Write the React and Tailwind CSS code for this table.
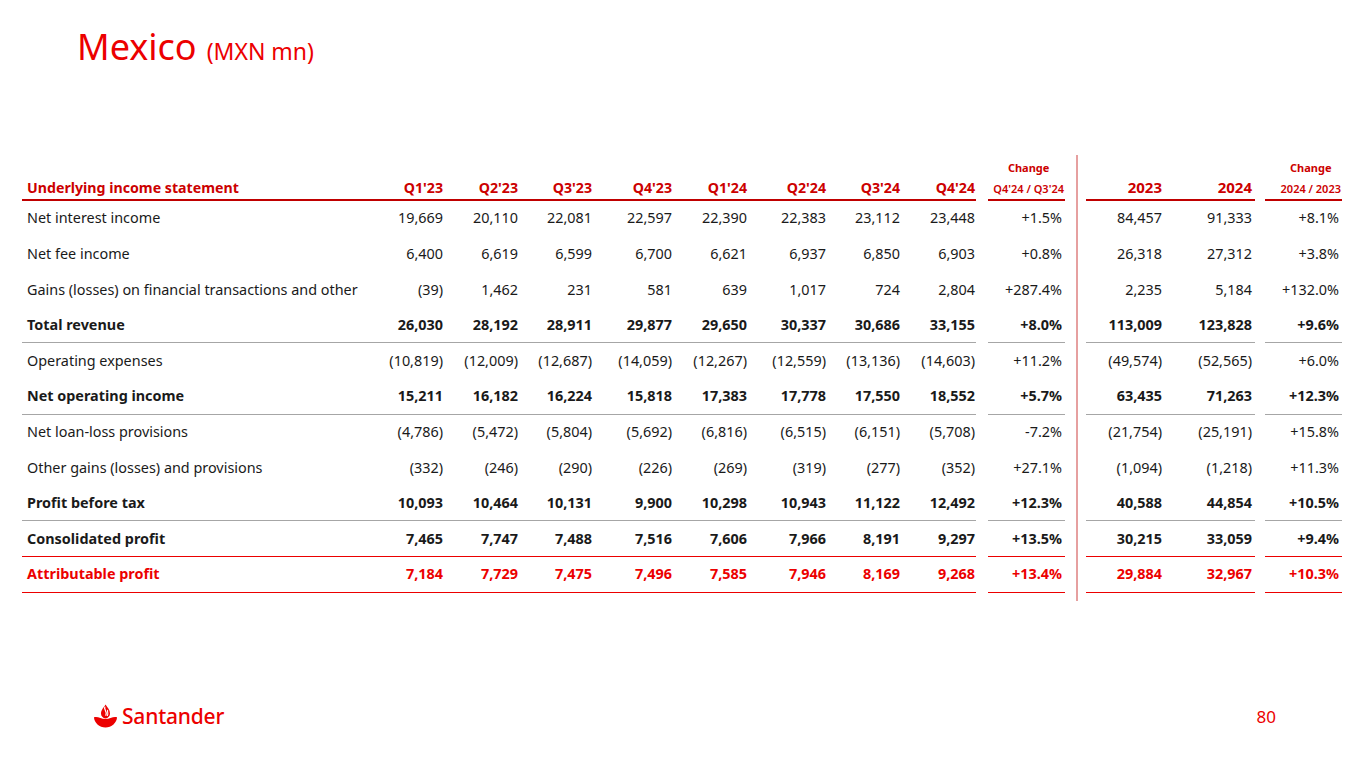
import React from "react";

const QW = ["w-[76px]", "w-[75px]", "w-[74px]", "w-[80px]", "w-[75px]", "w-[79px]", "w-[74px]", "w-[75px]"];
const QH = ["Q1'23", "Q2'23", "Q3'23", "Q4'23", "Q1'24", "Q2'24", "Q3'24", "Q4'24"];

const rows = [
  { label: "Net interest income", q: ["19,669", "20,110", "22,081", "22,597", "22,390", "22,383", "23,112", "23,448"], c: "+1.5%", y: ["84,457", "91,333"], c2: "+8.1%" },
  { label: "Net fee income", q: ["6,400", "6,619", "6,599", "6,700", "6,621", "6,937", "6,850", "6,903"], c: "+0.8%", y: ["26,318", "27,312"], c2: "+3.8%" },
  { label: "Gains (losses) on financial transactions and other", q: ["(39)", "1,462", "231", "581", "639", "1,017", "724", "2,804"], c: "+287.4%", y: ["2,235", "5,184"], c2: "+132.0%" },
  { label: "Total revenue", bold: true, line: "gray", q: ["26,030", "28,192", "28,911", "29,877", "29,650", "30,337", "30,686", "33,155"], c: "+8.0%", y: ["113,009", "123,828"], c2: "+9.6%" },
  { label: "Operating expenses", q: ["(10,819)", "(12,009)", "(12,687)", "(14,059)", "(12,267)", "(12,559)", "(13,136)", "(14,603)"], c: "+11.2%", y: ["(49,574)", "(52,565)"], c2: "+6.0%" },
  { label: "Net operating income", bold: true, line: "gray", q: ["15,211", "16,182", "16,224", "15,818", "17,383", "17,778", "17,550", "18,552"], c: "+5.7%", y: ["63,435", "71,263"], c2: "+12.3%" },
  { label: "Net loan-loss provisions", q: ["(4,786)", "(5,472)", "(5,804)", "(5,692)", "(6,816)", "(6,515)", "(6,151)", "(5,708)"], c: "-7.2%", y: ["(21,754)", "(25,191)"], c2: "+15.8%" },
  { label: "Other gains (losses) and provisions", q: ["(332)", "(246)", "(290)", "(226)", "(269)", "(319)", "(277)", "(352)"], c: "+27.1%", y: ["(1,094)", "(1,218)"], c2: "+11.3%" },
  { label: "Profit before tax", bold: true, line: "gray", q: ["10,093", "10,464", "10,131", "9,900", "10,298", "10,943", "11,122", "12,492"], c: "+12.3%", y: ["40,588", "44,854"], c2: "+10.5%" },
  { label: "Consolidated profit", bold: true, line: "red", q: ["7,465", "7,747", "7,488", "7,516", "7,606", "7,966", "8,191", "9,297"], c: "+13.5%", y: ["30,215", "33,059"], c2: "+9.4%" },
  { label: "Attributable profit", bold: true, red: true, line: "red", q: ["7,184", "7,729", "7,475", "7,496", "7,585", "7,946", "8,169", "9,268"], c: "+13.4%", y: ["29,884", "32,967"], c2: "+10.3%" },
];

function lineCls(line) {
  if (line === "gray") return "border-b border-[#a6a6a6]";
  if (line === "red") return "border-b border-[#ec0000]";
  return "border-b border-transparent";
}

function textCls(r) {
  if (r.red) return "font-bold text-[#ec0000]";
  if (r.bold) return "font-bold text-[#1a1a1a]";
  return "font-normal text-[#1a1a1a]";
}

function Flame() {
  return (
    <svg width="25" height="24" viewBox="0 0 25 24">
      <path d="M12.5 0.5 C14.5 3.5 17 5.8 17 9.5 C17 12.3 15 14 12.5 14.6 C10 14 8 12.3 8 9.5 C8 6 10.8 3.6 12.5 0.5Z" fill="#ec0000" />
      <path d="M11.8 3.2 C10.6 5.6 14.6 7.4 12.9 11.2" stroke="#fff" strokeWidth="1.3" fill="none" strokeLinecap="round" />
      <path d="M14.6 6.4 C14.2 8.2 15.6 9.2 14.4 11.6" stroke="#fff" strokeWidth="1.1" fill="none" strokeLinecap="round" />
      <path d="M1 13.2 C4.5 12 8 14.6 12.5 15.1 C17 14.6 20.5 12 24 13.2 C24 18.5 18.5 23.5 12.5 23.5 C6.5 23.5 1 18.5 1 13.2Z" fill="#ec0000" />
    </svg>
  );
}

function ChangeHead({ sub }) {
  return (
    <div className="flex flex-col items-center leading-none text-[#cc0000] font-bold">
      <span className="text-[11px] mb-[10px]">Change</span>
      <span className="text-[11px] font-semibold">{sub}</span>
    </div>
  );
}

export default function App() {
  return (
    <div className="w-[1365px] h-[768px] bg-white flex flex-col font-['Noto_Sans',sans-serif] overflow-hidden">
      <div className="pt-[29px] pl-[77px] h-[64px] flex items-baseline text-[#ec0000] leading-none">
        <span className="text-[36px]">Mexico</span>
        <span className="text-[23px] ml-[10px]">(MXN mn)</span>
      </div>

      <div className="mt-[91px] pl-[22px] flex text-[14.4px]">
        {/* Left block */}
        <div className="flex flex-col pb-[8px]">
          <div className="flex h-[46px]">
            <div className="w-[954px] flex items-end pb-[1px] border-b-2 border-[#c00000] text-[#cc0000] font-bold text-[14.2px]">
              <div className="w-[346px] pl-[5px]">Underlying income statement</div>
              {QH.map((h, i) => (
                <div key={h} className={QW[i] + " text-right pr-[1px]"}>{h}</div>
              ))}
            </div>
            <div className="ml-[12px] w-[77px] flex items-end justify-end pb-[5px] pr-[1px] border-b-2 border-[#c00000]">
              <ChangeHead sub="Q4'24 / Q3'24" />
            </div>
          </div>
          {rows.map((r) => (
            <div key={r.label} className={"flex h-[35.6px] " + textCls(r)}>
              <div className={"w-[954px] flex items-center " + lineCls(r.line)}>
                <div className="w-[346px] pl-[5px] whitespace-nowrap">{r.label}</div>
                {r.q.map((v, i) => (
                  <div key={i} className={QW[i] + " text-right pr-[1px]"}>{v}</div>
                ))}
              </div>
              <div className={"ml-[12px] w-[77px] flex items-center justify-end pr-[3px] " + lineCls(r.line)}>{r.c}</div>
            </div>
          ))}
        </div>

        {/* Divider */}
        <div className="ml-[11px] w-[2px] bg-[#e6a0a0] mr-[8px]" />

        {/* Right block */}
        <div className="flex flex-col pb-[8px]">
          <div className="flex h-[46px]">
            <div className="w-[169px] flex items-end pb-[1px] border-b-2 border-[#c00000] text-[#cc0000] font-bold text-[15px]">
              <div className="w-[79px] text-right pr-[3px]">2023</div>
              <div className="w-[90px] text-right pr-[3px]">2024</div>
            </div>
            <div className="ml-[10px] w-[77px] flex items-end justify-end pb-[5px] pr-[1px] border-b-2 border-[#c00000]">
              <ChangeHead sub="2024 / 2023" />
            </div>
          </div>
          {rows.map((r) => (
            <div key={r.label} className={"flex h-[35.6px] " + textCls(r)}>
              <div className={"w-[169px] flex items-center " + lineCls(r.line)}>
                <div className="w-[79px] text-right pr-[3px]">{r.y[0]}</div>
                <div className="w-[90px] text-right pr-[3px]">{r.y[1]}</div>
              </div>
              <div className={"ml-[10px] w-[77px] flex items-center justify-end pr-[3px] " + lineCls(r.line)}>{r.c2}</div>
            </div>
          ))}
        </div>
      </div>

      <div className="mt-auto mb-[38px] flex items-center justify-between pl-[93px] pr-[89px] h-[28px]">
        <div className="flex items-center">
          <Flame />
          <span className="ml-[4px] text-[21px] font-medium text-[#ec0000] leading-none tracking-[-0.2px]">Santander</span>
        </div>
        <span className="text-[17px] text-[#ec0000] leading-none">80</span>
      </div>
    </div>
  );
}
